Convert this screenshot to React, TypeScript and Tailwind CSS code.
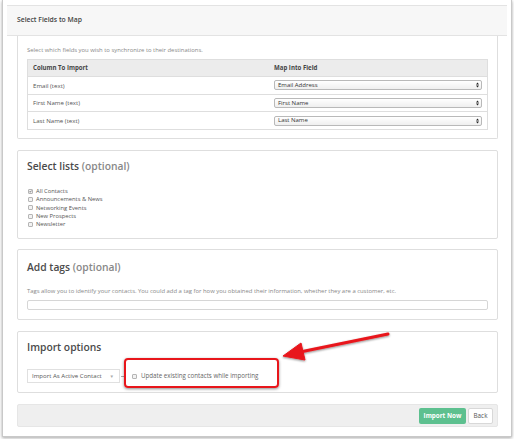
import React from 'react';

const font = { fontFamily: '"Open Sans", "Liberation Sans", sans-serif' };

function Checkbox({ checked = false }: { checked?: boolean }) {
    return (
        <span className="inline-flex items-center justify-center w-[5px] h-[5px] border border-[#b5b5b5] bg-[#f2f2f2] rounded-[1px] shrink-0">
            {checked && (
                <svg viewBox="0 0 10 10" className="w-[5px] h-[5px]">
                    <path d="M2 5 L4 7.5 L8.5 2" stroke="#333" strokeWidth="2" fill="none" />
                </svg>
            )}
        </span>
    );
}

function MapSelect({ label }: { label: string }) {
    return (
        <div className="flex items-center justify-between h-[10px] w-[208px] rounded-[2px] border border-[#b9b9b9] bg-gradient-to-b from-white to-[#efefef] pl-[3px] pr-[2px] text-[6px] text-[#333]">
            <span>{label}</span>
            <svg viewBox="0 0 6 10" className="w-[3px] h-[6px]">
                <path d="M0 4 L3 0 L6 4 Z M0 6 L3 10 L6 6 Z" fill="#222" />
            </svg>
        </div>
    );
}

const rows = [
    { col: 'Email (text)', field: 'Email Address' },
    { col: 'First Name (text)', field: 'First Name' },
    { col: 'Last Name (text)', field: 'Last Name' },
];

const lists = ['All Contacts', 'Announcements & News', 'Networking Events', 'New Prospects', 'Newsletter'];

export default function App() {
    return (
        <div className="relative w-[514px] h-[439px] bg-white overflow-hidden" style={font}>
            {/* Window frame */}
            <div className="mx-[2px] h-[437px] border-x border-b border-[#c9c9c9] shadow-[0_1px_3px_rgba(0,0,0,0.35)] bg-white pt-[5px] px-[4px]">
                {/* Header */}
                <div className="h-[31px] bg-[#f7f7f7] border-y border-[#e3e3e3] flex items-center pl-[10px] text-[6.8px] font-semibold text-[#444]">
                    Select Fields to Map
                </div>

                <div className="px-[10px] pr-[9px] flex flex-col">
                    {/* Fields to map */}
                    <div className="border-x border-b border-[#dedede] rounded-b-[2px] px-[9px] pt-[10px] pb-[8px]">
                        <p className="text-[5.9px] text-[#888] leading-[9px] mb-[4px]">
                            Select which fields you wish to synchronize to their destinations.
                        </p>
                        <div className="border border-[#dedede] text-[6.1px] text-[#555]">
                            <div className="grid grid-cols-[242px_1fr] h-[16px] items-center bg-[#ececec] font-bold text-[#444]">
                                <span className="pl-[5px]">Column To Import</span>
                                <span className="pl-[4px]">Map Into Field</span>
                            </div>
                            {rows.map((r) => (
                                <div key={r.col} className="grid grid-cols-[242px_1fr] h-[17.7px] items-center border-t border-[#dedede]">
                                    <span className="pl-[5px]">{r.col}</span>
                                    <div className="pl-[4px]">
                                        <MapSelect label={r.field} />
                                    </div>
                                </div>
                            ))}
                        </div>
                    </div>

                    {/* Select lists */}
                    <div className="mt-[11px] h-[89px] border border-[#dedede] rounded-[2px] px-[9px] pt-[7px]">
                        <h2 className="text-[10.3px] leading-[16px] font-semibold text-[#4a4a4a]">
                            Select lists <span className="text-[#888]">(optional)</span>
                        </h2>
                        <ul className="mt-[13px] flex flex-col text-[5.8px] leading-[8.3px] text-[#555]">
                            {lists.map((l, i) => (
                                <li key={l} className="flex items-center gap-[3px] pl-[1px]">
                                    <Checkbox checked={i === 0} />
                                    <span>{l}</span>
                                </li>
                            ))}
                        </ul>
                    </div>

                    {/* Add tags */}
                    <div className="mt-[10px] h-[71px] border border-[#dedede] rounded-[2px] px-[9px] pt-[9px]">
                        <h2 className="text-[10.3px] leading-[16px] font-semibold text-[#4a4a4a]">
                            Add tags <span className="text-[#888]">(optional)</span>
                        </h2>
                        <p className="mt-[12px] text-[5.9px] leading-[8px] text-[#888]">
                            Tags allow you to identify your contacts. You could add a tag for how you obtained their information, whether they are a customer, etc.
                        </p>
                        <div className="mt-[5px] h-[10px] border border-[#d6d6d6] rounded-[2px]" />
                    </div>

                    {/* Import options */}
                    <div className="mt-[11px] h-[62px] border border-[#dedede] rounded-[2px] px-[9px] pt-[7px]">
                        <h2 className="text-[10.3px] leading-[16px] font-semibold text-[#4a4a4a]">Import options</h2>
                        <div className="mt-[14px] flex items-center">
                            <div className="w-[93px] h-[14px] border border-[#e0e0e0] bg-white flex items-center justify-between pl-[4px] pr-[5px] text-[6.1px] text-[#555]">
                                <span>Import As Active Contact</span>
                                <span className="text-[4.5px] text-[#aaa]">▼</span>
                            </div>
                            <span className="ml-[1px] w-[3px] h-px bg-[#aaa]" />
                            <label className="ml-[8px] flex items-center gap-[4px] text-[6.2px] text-[#666]">
                                <Checkbox />
                                <span>Update existing contacts while importing</span>
                            </label>
                        </div>
                    </div>

                    {/* Footer */}
                    <div className="mt-[11px] h-[23px] bg-[#efefef] border border-[#e6e6e6] rounded-[2px] flex items-center justify-end gap-[2px] pr-[4px]">
                        <button className="h-[16px] w-[47px] rounded-[2px] bg-[#5dc08f] text-white text-[6.3px] font-bold">
                            Import Now
                        </button>
                        <button className="h-[16px] w-[25px] rounded-[2px] bg-white border border-[#d8d8d8] text-[#555] text-[6.3px]">
                            Back
                        </button>
                    </div>
                </div>
            </div>

            {/* Annotation: red highlight box */}
            <div className="absolute left-[124px] top-[358px] w-[155px] h-[30px] border-[2.5px] border-[#e8161b] rounded-[4px] shadow-[0_1px_3px_rgba(0,0,0,0.45)]" />

            {/* Annotation: arrow */}
            <svg className="absolute left-0 top-0 pointer-events-none" width="514" height="439" viewBox="0 0 514 439">
                <defs>
                    <filter id="sh" x="-20%" y="-50%" width="140%" height="200%">
                        <feDropShadow dx="0" dy="1" stdDeviation="1" floodColor="#000" floodOpacity="0.45" />
                    </filter>
                </defs>
                <g filter="url(#sh)" fill="#e8161b" stroke="#e8161b">
                    <line x1="388" y1="334" x2="300" y2="352" strokeWidth="3" strokeLinecap="round" />
                    <path d="M283 356 L301 343 L305 360 Z" strokeWidth="1" strokeLinejoin="round" />
                </g>
            </svg>
        </div>
    );
}
